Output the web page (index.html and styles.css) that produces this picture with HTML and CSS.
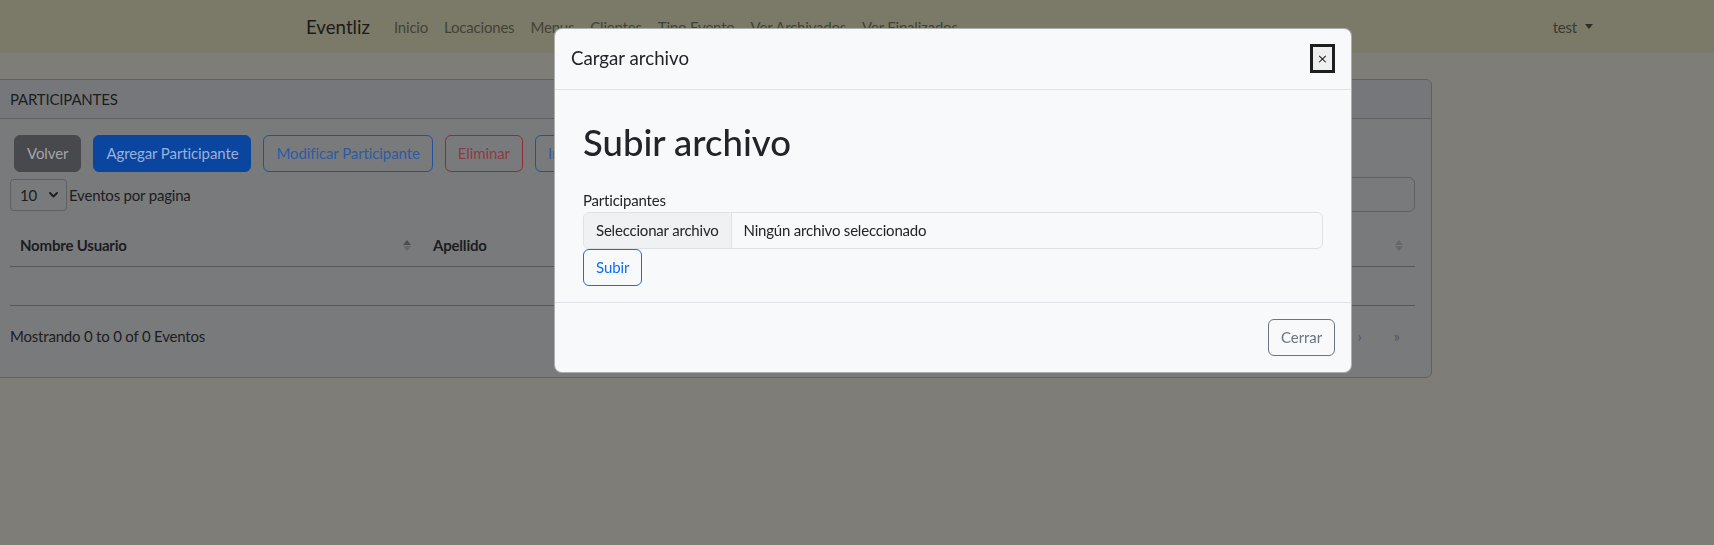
FILE: index.html
```html
<!DOCTYPE html>
<html lang="es">
<head>
<meta charset="utf-8">
<title>Participantes - Eventliz</title>
<link rel="stylesheet" href="styles.css">
</head>
<body>
  <nav class="navbar">
    <a class="brand" href="#">Eventliz</a>
    <ul class="nav-links">
      <li><a href="#">Inicio</a></li>
      <li><a href="#">Locaciones</a></li>
      <li><a href="#">Menus</a></li>
      <li><a href="#">Clientes</a></li>
      <li><a href="#">Tipo Evento</a></li>
      <li><a href="#">Ver Archivados</a></li>
      <li><a href="#">Ver Finalizados</a></li>
    </ul>
    <div class="user">test<span class="caret"></span></div>
  </nav>

  <main class="page">
    <section class="card">
      <header class="card-header">PARTICIPANTES</header>
      <div class="card-body">
        <div class="actions">
          <button class="btn btn-volver">Volver</button>
          <button class="btn btn-add">Agregar Participante</button>
          <button class="btn btn-outline-blue">Modificar Participante</button>
          <button class="btn btn-outline-red">Eliminar</button>
          <button class="btn btn-outline-blue">Importar</button>
        </div>
        <div class="table-top">
          <div class="length">
            <div class="select">10<svg class="chev" width="9" height="6" viewBox="0 0 9 6"><path d="M1 1l3.5 3.5L8 1" fill="none" stroke="#1c1d1f" stroke-width="1.8" stroke-linecap="round" stroke-linejoin="round"/></svg></div>
            <span>Eventos por pagina</span>
          </div>
          <div class="search"><div class="search-input"></div></div>
        </div>
        <table class="table">
          <thead>
            <tr>
              <th class="c1"><div class="th"><span>Nombre Usuario</span><span class="sort sorted"><i class="up"></i><i class="down"></i></span></div></th>
              <th class="c2"><div class="th"><span>Apellido</span><span class="sort"><i class="up"></i><i class="down"></i></span></div></th>
              <th class="c3"><div class="th"><span></span><span class="sort"><i class="up"></i><i class="down"></i></span></div></th>
              <th class="c4"><div class="th"><span></span><span class="sort"><i class="up"></i><i class="down"></i></span></div></th>
            </tr>
          </thead>
          <tbody>
            <tr><td class="empty" colspan="4"></td></tr>
          </tbody>
        </table>
        <div class="table-bottom">
          <span>Mostrando 0 to 0 of 0 Eventos</span>
          <ul class="pager">
            <li>›</li>
            <li>»</li>
          </ul>
        </div>
      </div>
    </section>
  </main>

  <div class="modal" role="dialog">
    <div class="modal-header">
      <h5 class="modal-title">Cargar archivo</h5>
      <button class="close" aria-label="Cerrar">×</button>
    </div>
    <div class="modal-body">
      <div class="container">
        <h1 class="upload-title">Subir archivo</h1>
        <label class="form-label">Participantes</label>
        <div class="file-input">
          <span class="file-btn">Seleccionar archivo</span>
          <span class="file-name">Ningún archivo seleccionado</span>
        </div>
        <button class="btn btn-primary-outline">Subir</button>
      </div>
    </div>
    <div class="modal-footer">
      <button class="btn btn-secondary-outline">Cerrar</button>
    </div>
  </div>
</body>
</html>
```

FILE: styles.css
```css
* { box-sizing: border-box; }

html, body { margin: 0; padding: 0; }

body {
  width: 1714px;
  height: 545px;
  overflow: hidden;
  background: #7e7d78;
  color: #1c1d1f;
  font-family: Lato, "Noto Sans", sans-serif;
  font-size: 15px;
  line-height: 24px;
  letter-spacing: -0.2px;
}

/* Navbar */
.navbar {
  height: 53px;
  background: #7b7a68;
  display: flex;
  align-items: center;
  padding: 0 113px 0 306px;
}
.brand {
  font-size: 18.7px;
  letter-spacing: 0;
  color: #1b1b17;
  text-decoration: none;
  margin-right: 16px;
  line-height: 30px;
}
.nav-links {
  display: flex;
  list-style: none;
  margin: 0;
  padding: 0;
}
.nav-links a {
  display: block;
  padding: 8px;
  color: #434236;
  text-decoration: none;
}
.user {
  margin-left: auto;
  display: flex;
  align-items: center;
  padding: 8px;
  color: #3a3a31;
}
.caret {
  margin-left: 8px;
  border-top: 5px solid #2e2e27;
  border-left: 4px solid transparent;
  border-right: 4px solid transparent;
}

/* Page */
.page { padding-top: 26px; }

.card {
  margin-left: -7px;
  width: 1439px;
  background: #797a7c;
  border: 1px solid #5f6063;
  border-radius: 6px;
}
.card-header {
  padding: 7px 16px;
  background: #76777a;
  border-bottom: 1px solid #5f6063;
  border-radius: 6px 6px 0 0;
}
.card-body { padding: 16px 16px 23px; }

.actions {
  display: flex;
  gap: 12px;
  padding-left: 4px;
}

.btn {
  display: inline-block;
  font: inherit;
  letter-spacing: -0.1px;
  line-height: 23px;
  padding: 6px 12px;
  border: 1px solid transparent;
  border-radius: 6px;
  background: none;
  cursor: pointer;
  white-space: nowrap;
}
.btn-volver { background: #47494d; border-color: #47494d; color: #a3a5a8; }
.btn-add { background: #0a469f; border-color: #0a469f; color: #9ab1da; }
.btn-outline-blue { border-color: #23529d; color: #2e5ba2; }
.btn-outline-red { border-color: #8e2d35; color: #8f3a43; }

.table-top {
  display: flex;
  justify-content: space-between;
  align-items: center;
  margin-top: 5px;
  height: 35px;
}
.length { display: flex; align-items: center; gap: 2px; }
.select {
  width: 57px;
  height: 32px;
  border: 1px solid #5f6063;
  border-radius: 4px;
  padding: 0 8px 0 9px;
  display: flex;
  align-items: center;
  justify-content: space-between;
}
.search-input {
  width: 220px;
  height: 35px;
  border: 1px solid #5f6063;
  border-radius: 6px;
}

.table {
  width: 100%;
  border-collapse: collapse;
  margin-top: 12px;
}
.table th {
  text-align: left;
  font-weight: 700;
  padding: 9px 12px 9px 10px;
  border-bottom: 1px solid #56575a;
}
.c1 { width: 413px; }
.c2 { width: 413px; }
.c3 { width: 290px; }
.th { display: flex; justify-content: space-between; align-items: center; height: 24px; }
.sort { display: flex; flex-direction: column; gap: 1px; width: 9px; align-items: center; }
.sort i { display: block; width: 0; height: 0; border-left: 4px solid transparent; border-right: 4px solid transparent; }
.sort .up { border-bottom: 5px solid #67686b; }
.sort .down { border-top: 5px solid #67686b; }
.sort.sorted .up { border-bottom-color: #4c4d50; }
.table td.empty {
  height: 39px;
  border-bottom: 1px solid #56575a;
}

.table-bottom {
  margin-top: 11px;
  display: flex;
  justify-content: space-between;
  align-items: center;
  height: 37px;
}
.pager {
  display: flex;
  list-style: none;
  margin: 0;
  padding: 0;
}
.pager li {
  width: 37px;
  text-align: center;
  color: #55565a;
  font-size: 15px;
}

/* Modal */
.modal {
  position: fixed;
  left: 554px;
  top: 28px;
  width: 798px;
  background: #f8f9fa;
  border: 1px solid rgba(0, 0, 0, .3);
  border-radius: 8px;
  color: #212529;
  z-index: 10;
}
.modal-header {
  display: flex;
  align-items: center;
  justify-content: space-between;
  padding: 15px 16px 16px;
  border-bottom: 1px solid #dee2e6;
}
.modal-title {
  margin: 0;
  font-size: 18.7px;
  letter-spacing: 0;
  font-weight: 400;
  line-height: 29px;
}
.close {
  width: 25px;
  height: 29px;
  padding: 0;
  border: 3px solid #1e1e1e;
  background: #efefef;
  color: #222;
  font-family: "DejaVu Sans", sans-serif;
  font-size: 13px;
  line-height: 1;
}
.modal-body { padding: 16px; }
.container { padding: 0 12px; }
.upload-title {
  margin: 14px 0 24px;
  font-size: 36.5px;
  letter-spacing: 0;
  font-weight: 500;
  line-height: 44px;
}
.form-label { display: block; line-height: 24px; }
.file-input {
  display: flex;
  height: 37px;
  border: 1px solid #dee2e6;
  border-radius: 6px;
  overflow: hidden;
  line-height: 35px;
}
.file-btn {
  padding: 0 12px;
  background: #eff1f3;
  border-right: 1px solid #dee2e6;
  letter-spacing: -0.2px;
}
.file-name { padding: 0 12px; }
.btn-primary-outline { border-color: #0d6efd; color: #0d6efd; }
.modal-footer {
  display: flex;
  justify-content: flex-end;
  padding: 16px;
  border-top: 1px solid #dee2e6;
}
.btn-secondary-outline { border-color: #6c757d; color: #6c757d; }
```
